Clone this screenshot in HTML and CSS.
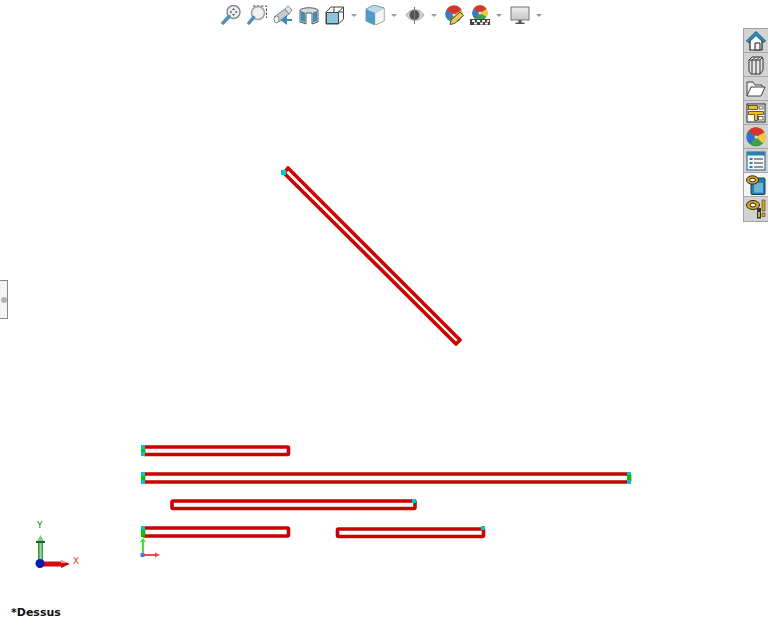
FILE: index.html
```html
<!DOCTYPE html>
<html lang="fr">
<head>
    <meta charset="UTF-8">
    <title>Esquisse - Dessus</title>
    <link rel="stylesheet" href="styles.css">
</head>
<body>
    <div class="viewport">
        <svg class="sketch" width="768" height="622" viewBox="0 0 768 622">
            <g class="slot">
                <polygon points="284,173 288,168 460,340 456,344"/>
                <rect x="143.500" y="447" width="145" height="7.500" rx="1"/>
                <rect x="143.500" y="474" width="486" height="8" rx="1"/>
                <rect x="172" y="501" width="243" height="7.500" rx="1"/>
                <rect x="143.500" y="528" width="145" height="8" rx="1"/>
                <rect x="337.500" y="529" width="146" height="7.500" rx="1"/>
            </g>
            <g class="cyan">
                <rect x="281" y="170" width="5" height="5"/>
                <rect x="141" y="445" width="4" height="4"/>
                <rect x="141" y="452" width="4" height="4"/>
                <rect x="141" y="472" width="4" height="4"/>
                <rect x="141" y="480" width="4" height="4"/>
                <rect x="627" y="472" width="4" height="4"/>
                <rect x="627" y="480" width="4" height="4"/>
                <rect x="412" y="499" width="4" height="4"/>
                <rect x="141" y="526" width="4" height="4"/>
                <rect x="481" y="526" width="4" height="4"/>
            </g>
            <g class="green">
                <rect x="141" y="449" width="4" height="3"/>
                <rect x="141" y="476" width="4" height="4"/>
                <rect x="627" y="475" width="4" height="5"/>
                <rect x="141" y="530" width="4" height="7"/>
            </g>

            <!-- petit repere de l'origine -->
            <path d="M143 555V541" stroke="#3fe03f" stroke-width="2"/>
            <path d="M143 538l3 4h-6z" fill="#3fe03f"/>
            <path d="M143 555h12" stroke="#f44" stroke-width="2"/>
            <path d="M160 555l-5-2.500v5z" fill="#f44"/>
            <rect x="140.500" y="553" width="4" height="4" fill="#5a6cf0"/>

            <!-- repere XYZ -->
            <defs>
                <linearGradient id="axeY" x1="0" x2="1" y1="0" y2="0">
                    <stop offset="0" stop-color="#1f7f2f"/>
                    <stop offset="0.500" stop-color="#9fd8a4"/>
                    <stop offset="1" stop-color="#2f8f3f"/>
                </linearGradient>
                <linearGradient id="vue" x1="0" x2="0" y1="0" y2="1">
                    <stop offset="0" stop-color="#f0f0f0"/>
                    <stop offset="1" stop-color="#c4c4c4"/>
                </linearGradient>
            </defs>
            <rect x="38" y="541" width="5" height="20" fill="url(#axeY)"/>
            <path d="M40.500 535l4.500 8h-9z" fill="#7fcc88"/>
            <path d="M36 542h9" stroke="#14601f" stroke-width="2"/>
            <rect x="42" y="561.500" width="20" height="5" fill="#d80c0c"/>
            <path d="M70 564l-9-4v8z" fill="#c81010"/>
            <path d="M61 560l6 3h-6z" fill="#f0a0a0"/>
            <circle cx="40" cy="563.500" r="4.500" fill="#0c1aa8"/>
            <text class="axis axis-y" x="37" y="528">Y</text>
            <text class="axis axis-x" x="73" y="564">X</text>
        </svg>

        <div class="toolbar">
            <button class="tool">
                <svg width="20" height="20" viewBox="0 0 20 20"><circle cx="12.500" cy="7" r="6.500" fill="#eef0f1" stroke="#888e95" stroke-width="1.500"/><path d="M12.500 3l1.500 2h-3zM12.500 11l1.500-2h-3zM8.500 7l2-1.500v3zM16.500 7l-2-1.500v3z" fill="#555"/><path d="M8 11.500L2 18" stroke="#4f93b8" stroke-width="3.500" stroke-linecap="round"/></svg>
            </button>
            <button class="tool">
                <svg width="20" height="20" viewBox="0 0 20 20"><path d="M6 1h13.500v12" fill="none" stroke="#444" stroke-dasharray="2.500 1.500"/><circle cx="11" cy="8" r="6.500" fill="#eef0f1" stroke="#9aa0a6" stroke-width="1.500"/><path d="M6.500 12.500L2 18" stroke="#4f93b8" stroke-width="3.500" stroke-linecap="round"/></svg>
            </button>
            <button class="tool">
                <svg width="20" height="20" viewBox="0 0 20 20"><path d="M1 12l11-8 4 5-10 8z" fill="#c9cccf" stroke="#7f8488"/><path d="M12 4l3-3 4 4-3 4z" fill="#e3e5e6" stroke="#888"/><ellipse cx="3.500" cy="14.500" rx="2.500" ry="3.500" fill="#f2f2f2" stroke="#888"/><path d="M19 15h-7M9 15l4-3v6z" stroke="#3f8ab5" stroke-width="2" fill="#3f8ab5"/></svg>
            </button>
            <button class="tool">
                <svg width="20" height="20" viewBox="0 0 20 20"><path d="M1 5c3-3 15-3 18 0v12l-6 2V8H7v11l-6-2z" fill="#d6d8da" stroke="#555a5e"/><path d="M2 6l4 1.500v10l-4-1.500zM14 7.500l4-1.500v10l-4 1.500z" fill="#3f8eb4"/></svg>
            </button>
            <button class="tool tool-drop">
                <svg width="20" height="20" viewBox="0 0 20 20"><path d="M1 7l5-5h12.500v12l-5 5H1z" fill="#fff" stroke="#444"/><path d="M1.500 7.500h12v11h-12z" fill="#8dc3dc" stroke="#444"/><path d="M13.500 7l5-5M9 2v5M18.500 7h-5" stroke="#444" fill="none"/></svg>
            </button>
            <span class="chevron"></span>
            <button class="tool tool-drop">
                <svg width="20" height="20" viewBox="0 0 20 20"><path d="M1 4l8-4 10 3v13l-9 4-9-4z" fill="#b8dcec" stroke="#8a9094"/><path d="M1 4l9 4v12l-9-4z" fill="#4f9cc2"/><path d="M10 8l9-5v13l-9 4z" fill="#f6f6f6" stroke="#9a9fa3" stroke-width="0.500"/></svg>
            </button>
            <span class="chevron"></span>
            <button class="tool tool-drop">
                <svg width="20" height="20" viewBox="0 0 20 20"><path d="M1 10c4-7 14-7 18 0-4 7-14 7-18 0z" fill="#cfcfcf" stroke="#aaa"/><circle cx="9.500" cy="10" r="5" fill="#555"/><path d="M9.500 2v17" stroke="#777"/></svg>
            </button>
            <span class="chevron"></span>
            <button class="tool tool-paint">
                <svg width="20" height="20" viewBox="0 0 20 20"><circle cx="9" cy="9" r="8.500" fill="#3fa04c"/><path d="M9 10L1.500 5A8.500 8.500 0 0 1 16.500 5z" fill="#d8342c"/><path d="M9 10l7.500-5a8.500 8.500 0 0 1 0 8z" fill="#efc93a"/><path d="M9 10L3 15A8.500 8.500 0 0 1 1.500 5z" fill="#3c78c8"/><circle cx="9" cy="10" r="1.500" fill="#dde"/><path d="M5 19.500l1-4.500 9-8 3.500 3.500-9 8z" fill="#f0c850" stroke="#444"/></svg>
            </button>
            <button class="tool tool-drop">
                <svg width="20" height="20" viewBox="0 0 20 20"><circle cx="10" cy="8" r="7.500" fill="#3fa04c"/><path d="M10 8L3.500 4a7.500 7.500 0 0 1 13 0z" fill="#d8342c"/><path d="M10 8l6.500-4a7.500 7.500 0 0 1 0 8z" fill="#efc93a"/><path d="M10 8l-5 6A7.500 7.500 0 0 1 3.500 4z" fill="#3c78c8"/><circle cx="10" cy="8" r="1.500" fill="#dde"/><rect y="14" width="20" height="6" fill="#444"/><path d="M2 15h3v2H2zM7 15h3v2H7zM12 15h3v2h-3zM17 15h2v2h-2zM4 17.500h3v2H4zM10 17.500h3v2h-3zM15 17.500h3v2h-3z" fill="#eee"/></svg>
            </button>
            <span class="chevron"></span>
            <button class="tool tool-drop">
                <svg width="20" height="20" viewBox="0 0 20 20"><rect x="1" y="2" width="18" height="13" fill="url(#vue)" stroke="#777"/><path d="M8.500 15h3v2.500h-3zM5.500 17.500h9V19h-9z" fill="#555"/></svg>
            </button>
            <span class="chevron"></span>
        </div>

        <div class="panel-handle"><span class="handle-dot"></span></div>

        <div class="taskpane">
            <button class="task">
                <svg width="20" height="20" viewBox="0 0 20 20"><path d="M4 9l6-6 6 6v10H4z" fill="#fff" stroke="#222" stroke-width="1.200"/><path d="M9 12h5v7H9z" fill="#eee" stroke="#222"/><path d="M10 .5L.5 10l2 1.500L10 4.500l7.500 7 2-1.500z" fill="#2f8fb8" stroke="#14506e"/></svg>
            </button>
            <button class="task">
                <svg width="20" height="20" viewBox="0 0 20 20"><path d="M3 5l3-3h10l1 2v11l-3 4H5l-2-3z" fill="#e6e6e6" stroke="#333"/><path d="M3 5h3v13M6 5h4v14M10 5h4v14M14 5l3-3M6.500 5l3-3M10.500 5l3-3" fill="none" stroke="#333"/></svg>
            </button>
            <button class="task">
                <svg width="20" height="20" viewBox="0 0 20 20"><path d="M1 17V3h6l2 3h7v2" fill="#eee" stroke="#444"/><path d="M1 17l4-9h14l-4 9z" fill="#fff" stroke="#444"/></svg>
            </button>
            <button class="task">
                <svg width="20" height="20" viewBox="0 0 20 20"><rect x="1" y="1" width="18" height="18" fill="#fff" stroke="#222"/><rect x="2.500" y="2.500" width="9" height="4" fill="#f0c020" stroke="#222" stroke-width="0.700"/><path d="M2.500 8.500h15v3h-6v6h-3v-6h-6z" fill="#f0c020" stroke="#222" stroke-width="0.700"/><rect x="13" y="3" width="4" height="3" fill="#fff" stroke="#222" stroke-width="0.700"/><rect x="12.500" y="13.500" width="4.500" height="3.500" fill="#fff" stroke="#222" stroke-width="0.700"/></svg>
            </button>
            <button class="task">
                <svg width="20" height="20" viewBox="0 0 20 20"><circle cx="10" cy="10" r="9.500" fill="#3fa04c"/><path d="M10 10L2 4.500A9.500 9.500 0 0 1 18.500 5.500z" fill="#d8342c"/><path d="M10 10l8.500-4.500A9.500 9.500 0 0 1 17 16.500z" fill="#efc93a"/><path d="M10 10l-6 7A9.500 9.500 0 0 1 2 4.500z" fill="#2f6fd0"/><circle cx="10" cy="10" r="1.500" fill="#dde"/></svg>
            </button>
            <button class="task">
                <svg width="20" height="20" viewBox="0 0 20 20"><rect x="1" y="1" width="18" height="18" fill="#f4f8fb" stroke="#1f5f86"/><rect x="1" y="1" width="18" height="3.500" fill="#2d7fae"/><path d="M3.500 7h3v2h-3zM3.500 11h3v2h-3zM3.500 15h3v2h-3z" fill="#2d7fae"/><path d="M8 8h9M8 12h9M8 16h9" stroke="#333" stroke-width="1.200"/></svg>
            </button>
            <button class="task task-active">
                <svg width="20" height="20" viewBox="0 0 20 20"><rect x="5" y="3" width="14" height="16.500" rx="1" fill="#2a7ea8" stroke="#153f55"/><rect x="8" y="8" width="9" height="9.500" fill="#6db4d4"/><ellipse cx="6.500" cy="5" rx="6" ry="4.200" fill="#e0a818" stroke="#222"/><ellipse cx="6.500" cy="5" rx="3" ry="1.800" fill="#fff" stroke="#222"/></svg>
            </button>
            <button class="task">
                <svg width="20" height="20" viewBox="0 0 20 20"><path d="M11 9h4v10.500h-4z" fill="#333"/><path d="M16 1h3v11h-3zM16 14h3v3.500h-3z" fill="#e0a818" stroke="#222" stroke-width="0.500"/><ellipse cx="7" cy="6" rx="6.500" ry="4.500" fill="#e0a818" stroke="#222"/><ellipse cx="7" cy="6" rx="3" ry="2" fill="#fff" stroke="#222"/><path d="M12 13h2v5h-2z" fill="#e0a818"/></svg>
            </button>
        </div>

        <div class="view-name">*Dessus</div>
    </div>
</body>
</html>
```

FILE: styles.css
```css
html, body { margin: 0; padding: 0; background: #fff; overflow: hidden; }
.viewport { position: relative; width: 768px; height: 622px; overflow: hidden; font-family: "DejaVu Sans", sans-serif; }

.sketch { position: absolute; left: 0; top: 0; }
.slot polygon, .slot rect { fill: none; stroke: #cc0000; stroke-width: 3.600; stroke-linejoin: round; }
.cyan rect { fill: #00c8c8; }
.green rect { fill: #00c800; }
.axis { font-size: 9px; }
.axis-y { fill: #007a10; }
.axis-x { fill: #f03030; }

.toolbar { position: absolute; left: 221px; top: 5px; width: max-content; display: flex; align-items: center; }
.tool { flex: none; width: 20px; height: 20px; padding: 0; border: 0; background: none; margin-right: 6px; }
.tool svg { display: block; }
.tool-paint { margin-right: 5px; }
.chevron { flex: none; width: 0; height: 0; margin-right: 8px; border-left: 3px solid transparent; border-right: 3px solid transparent; border-top: 3px solid #999; }

.panel-handle { position: absolute; left: -1px; top: 280px; width: 7px; height: 37px; display: flex; align-items: center; background: #f4f4f4; border: 1px solid #888; }
.handle-dot { width: 6px; height: 6px; margin-left: 1px; border-radius: 50%; background: #b4b4b4; }

.taskpane { position: absolute; right: 0; top: 28px; width: 24px; display: flex; flex-direction: column; background: #d2d2d2; border-left: 1px solid #a0a0a0; border-top: 1px solid #a0a0a0; border-bottom: 1px solid #a0a0a0; }
.task { width: 24px; height: 24px; padding: 0 0 0 2px; border: 0; border-bottom: 1px solid #a8a8a8; background: #d2d2d2; display: flex; align-items: center; justify-content: flex-start; box-sizing: border-box; }
.task:last-child { border-bottom: 0; }
.task-active { background: #f4f4f4; }

.view-name { position: absolute; left: 11px; top: 606px; font-size: 11px; font-weight: bold; line-height: 14px; color: #111; }
```
